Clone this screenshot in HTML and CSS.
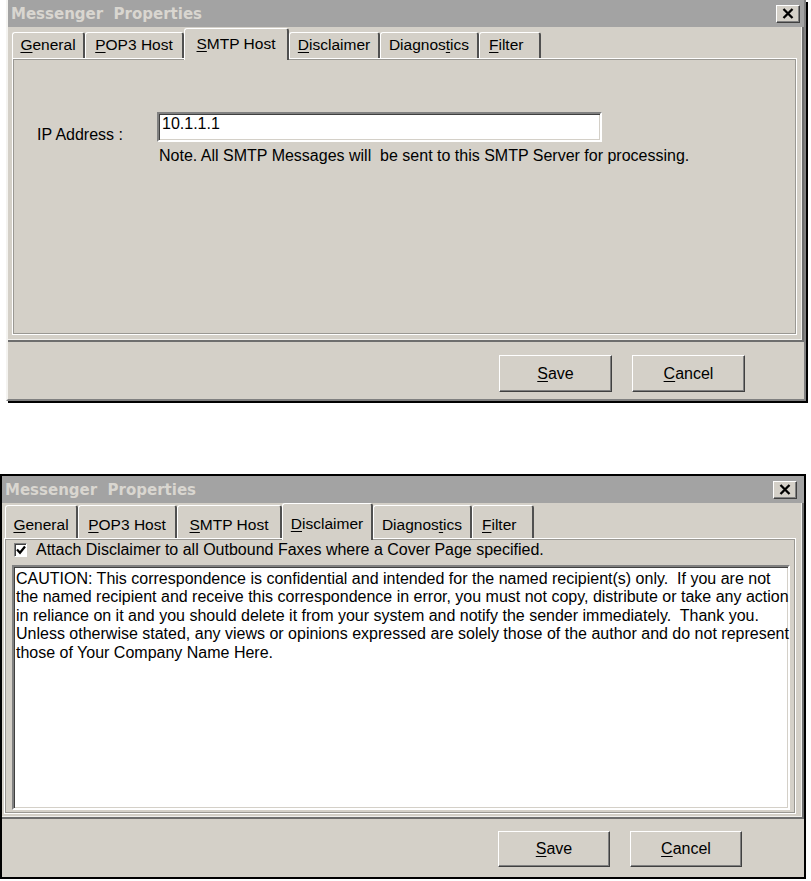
FILE: index.html
```html
<!doctype html>
<html lang="en">
<head>
  <meta charset="utf-8">
  <title>Messenger Properties</title>
  <meta name="viewport" content="width=device-width, initial-scale=1">
  <link rel="stylesheet" href="styles.css">
</head>
<body>
  <div class="window window-smtp">
    <div class="titlebar">
      <span class="title">Messenger&nbsp; Properties</span>
      <span class="close-btn">
        <svg width="12" height="11" viewBox="0 0 12 11"><path d="M1.5 1 L10.5 10 M10.5 1 L1.5 10" stroke="#000" stroke-width="2.3" fill="none"/></svg>
      </span>
    </div>
    <div class="sheet">
      <div class="tabs">
        <div class="tab tab-general"><u>G</u>eneral</div>
        <div class="tab tab-pop3"><u>P</u>OP3 Host</div>
        <div class="tab tab-smtp active"><u>S</u>MTP Host</div>
        <div class="tab tab-disclaimer"><u>D</u>isclaimer</div>
        <div class="tab tab-diag">Diagnos<u>t</u>ics</div>
        <div class="tab tab-filter"><u>F</u>ilter</div>
      </div>
      <div class="panel panel-smtp">
        <div class="ip-label">IP Address :</div>
        <div class="ip-field">
          <div class="text-input">10.1.1.1</div>
          <div class="note">Note. All SMTP Messages will&nbsp; be sent to this SMTP Server for processing.</div>
        </div>
      </div>
    </div>
    <div class="buttons">
      <button class="btn"><u>S</u>ave</button>
      <button class="btn"><u>C</u>ancel</button>
    </div>
  </div>

  <div class="window window-disclaimer">
    <div class="titlebar">
      <span class="title">Messenger&nbsp; Properties</span>
      <span class="close-btn">
        <svg width="12" height="11" viewBox="0 0 12 11"><path d="M1.5 1 L10.5 10 M10.5 1 L1.5 10" stroke="#000" stroke-width="2.3" fill="none"/></svg>
      </span>
    </div>
    <div class="sheet">
      <div class="tabs">
        <div class="tab tab-general"><u>G</u>eneral</div>
        <div class="tab tab-pop3"><u>P</u>OP3 Host</div>
        <div class="tab tab-smtp"><u>S</u>MTP Host</div>
        <div class="tab tab-disclaimer active"><u>D</u>isclaimer</div>
        <div class="tab tab-diag">Diagnos<u>t</u>ics</div>
        <div class="tab tab-filter"><u>F</u>ilter</div>
      </div>
      <div class="panel panel-disclaimer">
        <div class="check-row">
          <span class="checkbox">
            <svg width="10" height="10" viewBox="0 0 10 10"><path d="M1 4.5 L4 7.8 L9 1.5" stroke="#000" stroke-width="2.2" fill="none"/></svg>
          </span>
          <span>Attach Disclaimer to all Outbound Faxes where a Cover Page specified.</span>
        </div>
        <div class="memo">CAUTION: This correspondence is confidential and intended for the named recipient(s) only.&nbsp; If you are not<br>the named recipient and receive this correspondence in error, you must not copy, distribute or take any action<br>in reliance on it and you should delete it from your system and notify the sender immediately.&nbsp; Thank you.<br>Unless otherwise stated, any views or opinions expressed are solely those of the author and do not represent<br>those of Your Company Name Here.</div>
      </div>
    </div>
    <div class="buttons">
      <button class="btn"><u>S</u>ave</button>
      <button class="btn"><u>C</u>ancel</button>
    </div>
  </div>
</body>
</html>
```

FILE: styles.css
```css
* {
  box-sizing: border-box;
}
body {
  margin: 0;
  background: #fff;
  font-family: 'Liberation Sans', Arial, sans-serif;
  font-size: 16px;
  color: #000;
}
u {
  text-underline-offset: 2px;
}
.window {
  background: #d4d0c8;
  display: flex;
  flex-direction: column;
}
.window-smtp {
  margin-left: 6px;
  width: 800px;
  height: 401px;
  border-left: 2px solid #f4f3f0;
  border-right: 2px solid #808080;
  border-bottom: 2px solid #808080;
  box-shadow: 2px 2px 0 #000;
}
.window-disclaimer {
  margin-top: 73px;
  width: 806px;
  height: 405px;
  border: 2px solid #000;
}
.titlebar {
  height: 27px;
  background: #a3a3a3;
  display: flex;
  align-items: center;
  justify-content: space-between;
  padding: 0 4px 0 3px;
}
.title {
  font-family: 'DejaVu Sans', Verdana, sans-serif;
  font-weight: 700;
  font-size: 15px;
  color: #d9d6d0;
  white-space: nowrap;
}
.close-btn {
  width: 24px;
  height: 18px;
  background: #d4d0c8;
  border: 1px solid;
  border-color: #fff #404040 #404040 #fff;
  box-shadow: inset -1px -1px 0 #808080;
  display: flex;
  align-items: center;
  justify-content: center;
}
.window-disclaimer .close-btn {
  margin-right: 3px;
}
.sheet {
  display: flex;
  flex-direction: column;
  border-right: 2px solid #6e6e6e;
  border-bottom: 2px solid #6e6e6e;
  box-shadow: inset -1px -1px 0 #f0efec;
}
.window-smtp .sheet {
  padding: 0 5px 5px 4px;
}
.window-disclaimer .sheet {
  padding: 0 6px 3px 2px;
}
.tabs {
  display: flex;
  align-items: flex-end;
  position: relative;
  z-index: 1;
}
.window-smtp .tabs {
  height: 31px;
}
.window-disclaimer .tabs {
  height: 35px;
  padding-left: 1px;
}
.tab {
  display: flex;
  align-items: flex-end;
  justify-content: center;
  font-size: 15.5px;
  line-height: 17px;
  padding-bottom: 5px;
  background: #d4d0c8;
  border-top: 1px solid #fff;
  border-left: 1px solid #fff;
  border-right: 2px solid #505050;
  border-radius: 3px 3px 0 0;
  white-space: nowrap;
}
.window-smtp .tab {
  height: 26px;
}
.window-disclaimer .tab {
  height: 33px;
}
.tab.active {
  padding-bottom: 8px;
  margin-bottom: -2px;
}
.window-smtp .tab.active {
  height: 32px;
}
.window-disclaimer .tab.active {
  height: 37px;
}
.tab-general { width: 73px; }
.tab-pop3 { width: 99px; }
.tab-smtp { width: 105px; }
.tab-disclaimer { width: 91px; }
.tab-diag { width: 99px; }
.tab-filter {
  width: 62px;
  justify-content: flex-start;
  padding-left: 9px;
}
.panel {
  border: 1px solid #fff;
  box-shadow: inset 0 0 0 1px #9a9893;
}
.panel-smtp {
  height: 277px;
  padding: 53px 0 0 24px;
  display: grid;
  grid-template-columns: 120px 445px;
  align-content: start;
}
.ip-label {
  margin-top: 14px;
  line-height: 17px;
}
.text-input,
.memo {
  background: #fff;
  border: 2px solid;
  border-color: #808080 #fff #fff #808080;
  box-shadow: inset 1px 1px 0 #404040, inset -1px -1px 0 #d4d0c8;
}
.text-input {
  height: 30px;
  line-height: 17px;
  padding: 1px 3px;
}
.note {
  margin-top: 5px;
  padding-left: 2px;
  line-height: 17px;
  white-space: nowrap;
}
.panel-disclaimer {
  height: 276px;
  padding: 2px 0 1px 7px;
  display: flex;
  flex-direction: column;
}
.check-row {
  display: flex;
  align-items: flex-start;
  gap: 9px;
  line-height: 17px;
  padding-left: 2px;
}
.checkbox {
  width: 13px;
  height: 14px;
  margin-top: 2px;
  background: #fff;
  border: 1px solid;
  border-color: #808080 #fff #fff #808080;
  box-shadow: inset 1px 1px 0 #404040;
  display: flex;
  align-items: center;
  justify-content: center;
}
.memo {
  margin-top: 7px;
  width: 778px;
  height: 245px;
  padding: 3px 2px;
  line-height: 18.4px;
  white-space: nowrap;
}
.buttons {
  display: flex;
  justify-content: flex-end;
  gap: 20px;
}
.window-smtp .buttons {
  padding: 13px 59px 0 0;
}
.window-disclaimer .buttons {
  padding: 12px 62px 0 0;
}
.btn {
  width: 113px;
  height: 37px;
  padding: 0;
  background: #d4d0c8;
  border: 1px solid;
  border-color: #fff #404040 #404040 #fff;
  box-shadow: inset -1px -1px 0 #808080;
  font-family: 'Liberation Sans', Arial, sans-serif;
  font-size: 16px;
  color: #000;
}
.window-disclaimer .btn {
  width: 112px;
  height: 36px;
}
```
